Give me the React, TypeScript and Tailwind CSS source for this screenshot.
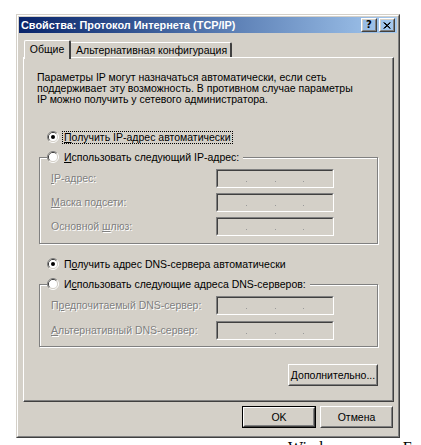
import React from "react";

const Radio = ({ checked }: { checked?: boolean }) => (
  <svg width="12" height="12" viewBox="0 0 12 12" className="shrink-0 bg-[#d4d0c8]">
    <path d="M2.11 9.89 A5.5 5.5 0 0 1 9.89 2.11" fill="none" stroke="#808080" strokeWidth="1" />
    <path d="M9.89 2.11 A5.5 5.5 0 0 1 2.11 9.89" fill="none" stroke="#ffffff" strokeWidth="1" />
    <path d="M2.82 9.18 A4.5 4.5 0 0 1 9.18 2.82" fill="none" stroke="#404040" strokeWidth="1" />
    <path d="M9.18 2.82 A4.5 4.5 0 0 1 2.82 9.18" fill="none" stroke="#d4d0c8" strokeWidth="1" />
    <circle cx="6" cy="6" r="4" fill="#ffffff" />
    {checked && <circle cx="6" cy="6" r="2" fill="#000000" />}
  </svg>
);

const Field = () => (
  <div className="w-[118px] h-[19px] border border-t-[#808080] border-l-[#808080] border-b-white border-r-white">
    <div className="h-full border border-t-[#404040] border-l-[#404040] border-b-[#d4d0c8] border-r-[#d4d0c8] bg-[#d4d0c8] flex">
      <div className="flex-1" />
      <div className="w-[1px] h-[1px] bg-[#9a9a9a] mt-[10px]" />
      <div className="flex-1" />
      <div className="w-[1px] h-[1px] bg-[#9a9a9a] mt-[10px]" />
      <div className="flex-1" />
      <div className="w-[1px] h-[1px] bg-[#9a9a9a] mt-[10px]" />
      <div className="flex-1" />
    </div>
  </div>
);

const dis = "text-[#808080] [text-shadow:1px_1px_0_#ffffff]";

const FieldRow = ({ children }: { children: React.ReactNode }) => (
  <div className="flex items-center h-[19px]">
    <div className={`w-[165px] whitespace-nowrap ${dis}`}>{children}</div>
    <Field />
  </div>
);

const Button = ({
  children,
  def,
  className = "",
}: {
  children: React.ReactNode;
  def?: boolean;
  className?: string;
}) => (
  <div className={`${def ? "border border-black" : ""} ${className}`}>
    <div className="h-full border border-t-white border-l-white border-b-[#404040] border-r-[#404040]">
      <div className="h-full border border-t-[#d4d0c8] border-l-[#d4d0c8] border-b-[#808080] border-r-[#808080] flex items-center justify-center">
        {children}
      </div>
    </div>
  </div>
);

const GroupBox = ({
  legend,
  children,
  gap,
  pb,
}: {
  legend: React.ReactNode;
  children: React.ReactNode;
  gap: string;
  pb: string;
}) => (
  <div className={`ml-[2px] border border-[#808080] [box-shadow:inset_1px_1px_0_#ffffff,1px_1px_0_#ffffff] pl-[11px] ${pb}`}>
    <div className="-mt-[8px] -ml-[4px] h-[14px] flex">
      <div className="flex items-center gap-[5px] bg-[#d4d0c8] pr-[4px]">{legend}</div>
    </div>
    <div className={`mt-[5px] flex flex-col ${gap}`}>{children}</div>
  </div>
);

export default function App() {
  return (
    <div className="w-[421px] h-[445px] bg-white overflow-hidden pl-[16px] pt-[14px] font-['Liberation_Sans',Arial,sans-serif] text-[10.5px] leading-[11px] text-black">
      <div className="w-[384px] h-[424px] border border-t-[#d4d0c8] border-l-[#d4d0c8] border-b-[#404040] border-r-[#404040]">
        <div className="h-full border border-t-white border-l-white border-b-[#808080] border-r-[#808080] bg-[#d4d0c8] p-[1px] flex flex-col">
          {/* Title bar */}
          <div className="h-[16px] bg-linear-to-r from-[#0a246a] to-[#a6caf0] flex items-center pl-[2px] pr-[2px]">
            <div className="text-white font-bold text-[10.9px] whitespace-nowrap">
              Свойства: Протокол Интернета (TCP/IP)
            </div>
            <div className="ml-auto flex gap-[2px]">
              <Button className="w-[16px] h-[14px]">
                <span className="font-bold text-[10px] leading-[10px] font-['DejaVu_Sans',sans-serif] -mt-[1px]">?</span>
              </Button>
              <Button className="w-[16px] h-[14px]">
                <svg width="8" height="7" viewBox="0 0 8 7">
                  <path d="M0.5 0.5 L7 6.5 M1.5 0.5 L7.5 6.5 M7 0.5 L0.5 6.5 M7.5 0.5 L1.5 6.5" stroke="#000" strokeWidth="1" />
                </svg>
              </Button>
            </div>
          </div>

          <div className="pl-[4px] pr-[3px] flex flex-col">
            {/* Tabs */}
            <div className="mt-[7px] h-[17px] flex items-end pl-[1px] relative z-10">
              <div className="h-[19px] -mb-[2px] w-[47px] border-t border-l border-white border-r-2 border-r-[#404040] rounded-tl-[2px] rounded-tr-[2px] bg-[#d4d0c8] flex justify-center pt-[3px]">
                <span>Общие</span>
              </div>
              <div className="h-[15px] w-[161px] border-t border-white border-r-2 border-r-[#404040] rounded-tr-[2px] bg-[#d4d0c8] pl-[5px] pt-[2px] whitespace-nowrap">
                Альтернативная конфигурация
              </div>
            </div>

            {/* Panel */}
            <div className="h-[345px] border-t border-l border-white border-r border-b border-r-[#404040] border-b-[#404040] [box-shadow:inset_-1px_-1px_0_#808080] pl-[13px] pr-[15px] pb-[15px] flex flex-col">
              <div className="mt-[14px]">
                <div>Параметры IP могут назначаться автоматически, если сеть</div>
                <div>поддерживает эту возможность. В противном случае параметры</div>
                <div>IP можно получить у сетевого администратора.</div>
              </div>

              <div className="mt-[25px] ml-[10px] h-[14px] flex items-center gap-[3px]">
                <Radio checked />
                <span className="border border-dotted border-black px-[1px] leading-[11px]">
                  <u>П</u>олучить IP-адрес автоматически
                </span>
              </div>

              <div className="mt-[13px]">
                <GroupBox
                  gap="gap-[5px]"
                  pb="pb-[7px]"
                  legend={
                    <>
                      <Radio />
                      <span>
                        <u>И</u>спользовать следующий IP-адрес:
                      </span>
                    </>
                  }
                >
                  <FieldRow>
                    <u>I</u>P-адрес:
                  </FieldRow>
                  <FieldRow>
                    <u>М</u>аска подсети:
                  </FieldRow>
                  <FieldRow>
                    Основной <u>ш</u>люз:
                  </FieldRow>
                </GroupBox>
              </div>

              <div className="mt-[13px] ml-[10px] h-[14px] flex items-center gap-[5px]">
                <Radio checked />
                <span>
                  П<u>о</u>лучить адрес DNS-сервера автоматически
                </span>
              </div>

              <div className="mt-[13px]">
                <GroupBox
                  gap="gap-[6px]"
                  pb="pb-[6px]"
                  legend={
                    <>
                      <Radio />
                      <span>
                        И<u>с</u>пользовать следующие адреса DNS-серверов:
                      </span>
                    </>
                  }
                >
                  <FieldRow>
                    П<u>р</u>едпочитаемый DNS-сервер:
                  </FieldRow>
                  <FieldRow>
                    <u>А</u>льтернативный DNS-сервер:
                  </FieldRow>
                </GroupBox>
              </div>

              <div className="mt-auto flex justify-end">
                <Button className="w-[90px] h-[22px]">
                  <span>
                    <u>Д</u>ополнительно...
                  </span>
                </Button>
              </div>
            </div>

            {/* Buttons */}
            <div className="mt-[4px] flex justify-end gap-[4px] pr-[1px]">
              <Button def className="w-[74px] h-[22px]">
                <span>OK</span>
              </Button>
              <Button className="w-[73px] h-[22px]">
                <span>Отмена</span>
              </Button>
            </div>
          </div>
        </div>
      </div>
      <div className="flex font-['Liberation_Serif',serif] text-[16px] leading-[16px] mt-[2px]">
        <span className="ml-[272px]">Windows</span>
        <span className="ml-[54px]">Е</span>
      </div>
    </div>
  );
}
